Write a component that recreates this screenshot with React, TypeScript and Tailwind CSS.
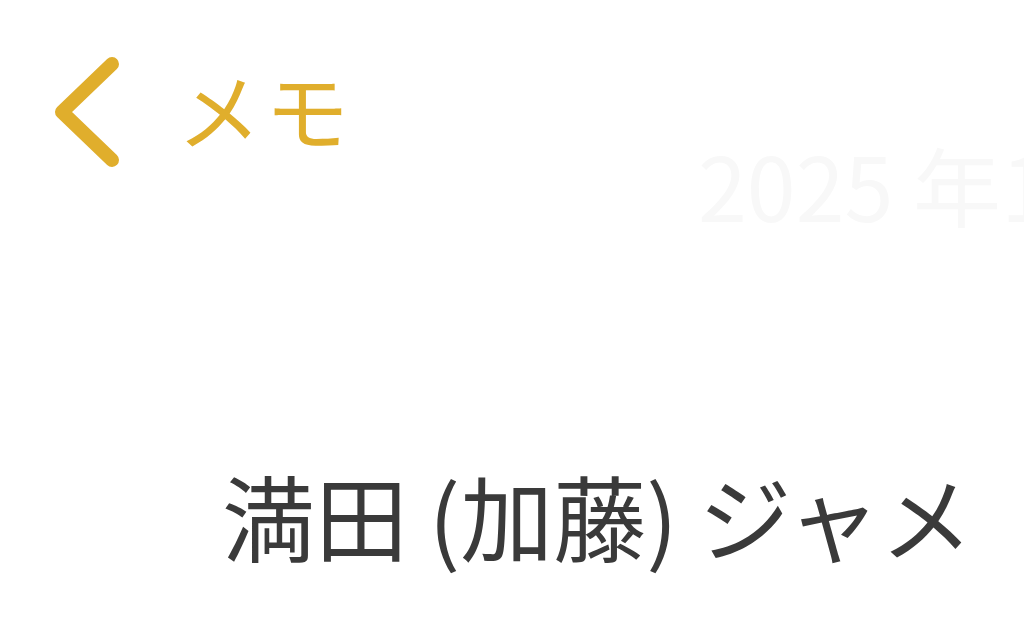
export default function App() {
  const font = { fontFamily: '"Noto Sans CJK JP", "Noto Sans", sans-serif' };
  return (
    <div className="w-[1024px] h-[617px] bg-white overflow-hidden" style={font}>
      {/* Nav bar */}
      <div className="flex items-center pl-[50px] pt-[56px]">
        <svg width="72" height="112" viewBox="0 0 72 112" fill="none">
          <path d="M62 8 L12 56 L62 104" stroke="#e0ae2c" strokeWidth="14" strokeLinecap="round" strokeLinejoin="round" />
        </svg>
        <span className="ml-[55px] -mt-[8px] text-[84px] leading-none text-[#e0ae2c] tracking-[4px]">メモ</span>
      </div>

      {/* Date (faded, runs off the right edge) */}
      <div className="pl-[698px] -mt-[28px] overflow-hidden">
        <div className="text-[88px] leading-none text-[#f8f8f8] whitespace-nowrap">2025 年1</div>
      </div>

      {/* Title */}
      <div className="pl-[222px] mt-[240px] text-[93px] leading-none text-[#3a3a3a] whitespace-nowrap">
        満田 (加藤) ジャメ
      </div>
    </div>
  );
}
